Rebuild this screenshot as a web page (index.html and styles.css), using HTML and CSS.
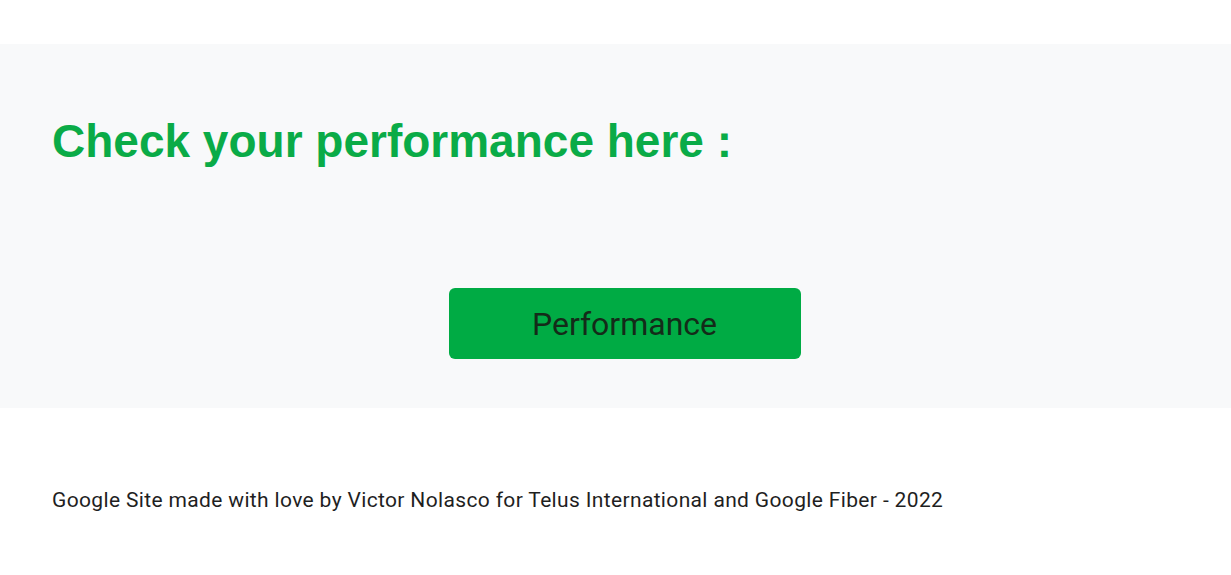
FILE: index.html
```html
<!DOCTYPE html>
<html lang="en">
<head>
  <meta charset="UTF-8">
  <meta name="viewport" content="width=device-width, initial-scale=1.0">
  <title>Performance</title>
  <link rel="stylesheet" href="styles.css">
</head>
<body>

  <div class="top-space"></div>

  <section class="perf-section">
    <h1 class="perf-title">Check your performance here :</h1>
    <div class="perf-action">
      <a href="#" class="perf-button">Performance</a>
    </div>
  </section>

  <footer class="site-footer">
    Google Site made with love by Victor Nolasco for Telus International and Google Fiber - 2022
  </footer>

</body>
</html>
```

FILE: styles.css
```css
body {
  margin: 0;
  background-color: #fff;
  font-family: Roboto, 'Open Sans', sans-serif;
}

.top-space {
  height: 44px;
}

.perf-section {
  background-color: #f8f9fa;
  height: 364px;
  padding: 0 52px;
  box-sizing: border-box;
  display: flex;
  flex-direction: column;
}

.perf-title {
  margin: 0;
  padding-top: 70px;
  font-family: 'Liberation Sans', Arial, sans-serif;
  font-weight: bold;
  font-size: 46px;
  line-height: 54px;
  color: #0aab47;
}

.perf-action {
  display: flex;
  justify-content: center;
  margin-top: 120px;
  padding-left: 18px;
}

.perf-button {
  display: flex;
  align-items: center;
  justify-content: center;
  width: 352px;
  height: 71px;
  background-color: #00ab44;
  border-radius: 6px;
  color: #142b19;
  font-size: 32px;
  text-decoration: none;
}

.site-footer {
  padding: 78px 52px 0;
  font-size: 21px;
  letter-spacing: 0.35px;
  line-height: 28px;
  color: #1f1f1f;
}
```
